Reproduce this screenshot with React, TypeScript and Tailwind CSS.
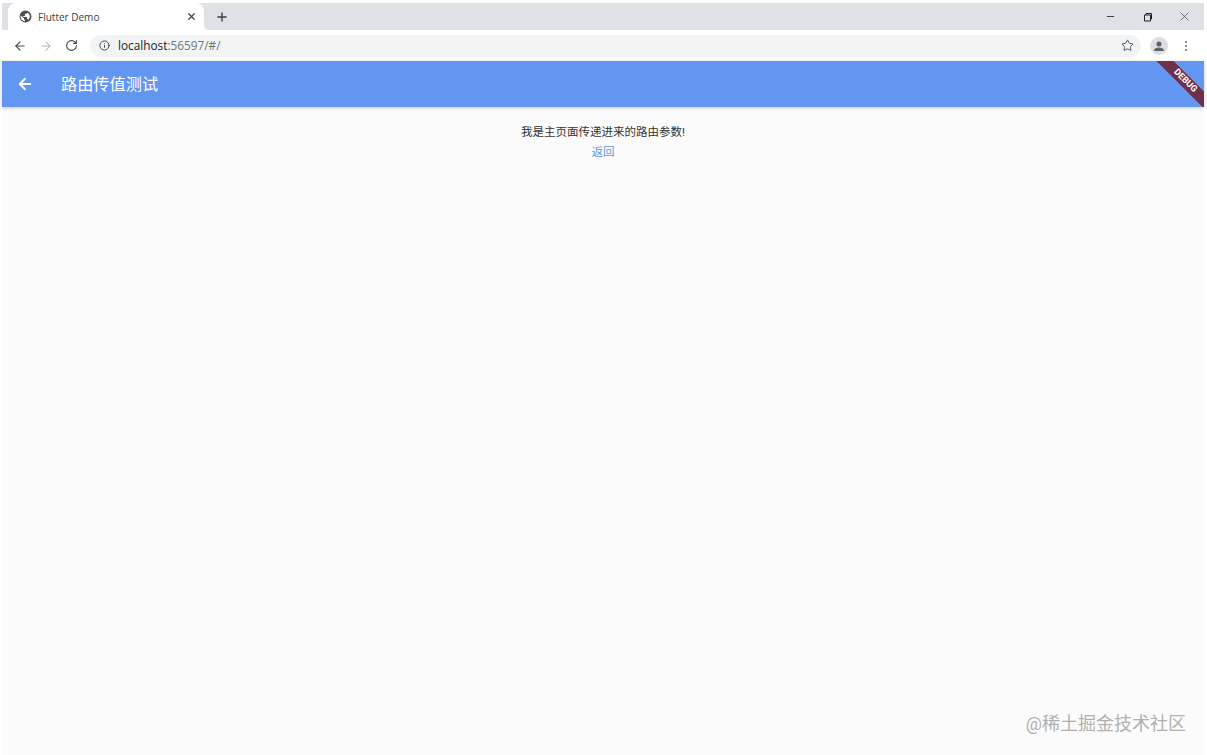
import { ArrowLeft, ArrowRight, RotateCw, Info, Star, Minus, X, Plus } from "lucide-react";

const cjk = { fontFamily: '"Roboto","Noto Sans CJK SC",sans-serif' };

export default function App() {
  return (
    <div className="h-[755px] w-[1207px] overflow-hidden bg-white pl-[2px] pr-[3px] flex flex-col" style={cjk}>
      <div className="mt-[3px] h-[27px] shrink-0 bg-[#dee1e6] flex items-stretch">
        <div className="relative ml-[6px] w-[196px] bg-white rounded-t-[8px] flex items-center pl-[11px] pr-[7px]">
          <svg width="13" height="13" viewBox="0 0 24 24" fill="#4a4d51"><path d="M12 1a11 11 0 100 22 11 11 0 000-22zm-1 19.9A9 9 0 013 12c0-.6.1-1.2.2-1.8L9 15v1c0 1.1.9 2 2 2v2.9zm6.9-2.5c-.3-.8-1-1.4-1.9-1.4h-1v-3c0-.6-.4-1-1-1H8v-2h2c.6 0 1-.4 1-1V7h2c1.1 0 2-.9 2-2v-.4a8 8 0 012.9 12.8z" /></svg>
          <span className="ml-[6px] mt-[1px] text-[10px] text-[#3c4043] font-['Open_Sans']">Flutter Demo</span>
          <X size={11} strokeWidth={2.6} className="ml-auto text-[#3c4043]" />
          <svg className="absolute bottom-0 right-[-6px]" width="6" height="6" viewBox="0 0 6 6" fill="#ffffff"><path d="M0 0C0 4 2 6 6 6H0z" /></svg>
        </div>
        <Plus size={14} strokeWidth={2.4} className="ml-[11px] self-center text-[#3c4043]" />
        <div className="ml-auto flex items-center text-[#202124]">
          <Minus size={11} strokeWidth={1.8} />
          <svg className="ml-[27px]" width="10" height="10" viewBox="0 0 10 10" fill="none" stroke="#202124"><path d="M1.5 3h6v6h-6zM3 3V1.5h5.5V7H7.5" /></svg>
          <X size={15} strokeWidth={1.1} className="ml-[24px] mr-[12px] text-[#3c4043]" />
        </div>
      </div>
      <div className="h-[31px] shrink-0 bg-white flex items-center">
        <ArrowLeft size={14} strokeWidth={2} className="ml-[11px] text-[#45494d]" />
        <ArrowRight size={14} strokeWidth={1.8} className="ml-[12px] text-[#b4b6b9]" />
        <RotateCw size={13} strokeWidth={2} className="ml-[12px] text-[#45494d]" />
        <div className="ml-[12px] h-[22px] w-[1051px] rounded-full bg-[#f1f3f4] flex items-center pl-[9px] pr-[7px]">
          <Info size={11} className="text-[#3c4043]" />
          <span className="ml-[8px] text-[11.8px] text-[#70757a] font-['Open_Sans']"><span className="text-[#202124]">localhost</span>:56597/#/</span>
          <Star size={13} strokeWidth={1.7} className="ml-auto text-[#45494d]" />
        </div>
        <div className="ml-[9px] h-[18px] w-[18px] rounded-full bg-[#dcdee1] flex items-center justify-center">
          <svg width="12" height="12" viewBox="0 0 24 24" fill="#5f6368"><circle cx="12" cy="8" r="5" /><path d="M2 22c0-5 5-7 10-7s10 2 10 7z" /></svg>
        </div>
        <div className="ml-[17px] flex flex-col gap-[2px]">
          <span className="h-[2px] w-[2px] bg-[#5f6368] rounded-full" />
          <span className="h-[2px] w-[2px] bg-[#5f6368] rounded-full" />
          <span className="h-[2px] w-[2px] bg-[#5f6368] rounded-full" />
        </div>
      </div>
      <div className="relative h-[46px] shrink-0 bg-[#6296f0] shadow-[0_1px_4px_rgba(0,0,0,0.2)] z-10 flex items-center overflow-hidden">
        <ArrowLeft size={18} strokeWidth={2.4} className="ml-[14px] text-white" />
        <span className="ml-[27px] text-[16.2px] leading-[24px] mt-[1px] text-white">路由传值测试</span>
        <div className="absolute right-[-21px] top-[14px] w-[80px] h-[12px] rotate-45 bg-[#6e2f4a] flex items-center justify-center text-[9px] font-bold text-white">DEBUG</div>
      </div>
      <div className="flex-1 bg-[#fbfbfb] relative flex flex-col items-center pt-[17px]">
        <span className="text-[11.5px] leading-[16px] text-[#333]">我是主页面传递进来的路由参数!</span>
        <span className="mt-[4px] text-[11.5px] leading-[16px] text-[#5c94e6]">返回</span>
        <span className="absolute right-[18px] bottom-[18px] text-[18px] leading-[26px] text-[#b0b0b0]">@稀土掘金技术社区</span>
      </div>
    </div>
  );
}
